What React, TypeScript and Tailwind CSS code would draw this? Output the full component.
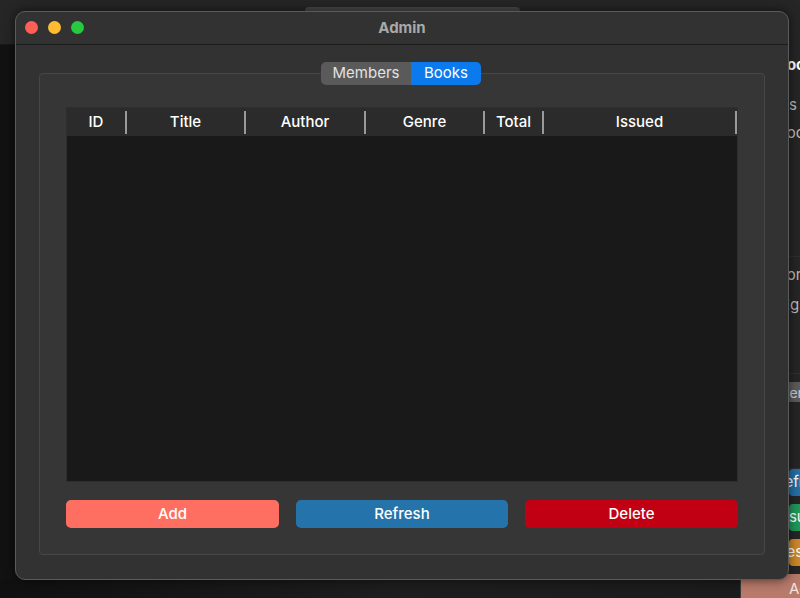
const FONT = "Inter, Roboto, 'Liberation Sans', sans-serif";

const columns = [
  { label: "ID", width: "w-[60px]" },
  { label: "Title", width: "w-[119px]" },
  { label: "Author", width: "w-[120px]" },
  { label: "Genre", width: "w-[119px]" },
  { label: "Total", width: "w-[59px]" },
  { label: "Issued", width: "w-[193px]" },
];

function BackgroundWindow() {
  // the window behind, mostly covered by Admin
  return (
    <div className="absolute left-[740px] top-[44px] w-[120px] h-[560px] bg-[#262626] border-l border-[#3a3a3a] flex flex-col text-[15px] text-[#dcdcdc]">
      <div className="h-[33px] flex items-end pl-[36px] font-bold text-white">Books</div>
      <div className="h-[40px] flex items-end pl-[44px] text-[#bdbdbd]">Is</div>
      <div className="h-[28px] flex items-end pl-[36px] text-[#bdbdbd]">Book</div>
      <div className="h-[112px] border-b border-[#303030]" />
      <div className="h-[30px] flex items-end pl-[36px] text-[#bdbdbd]">Born</div>
      <div className="h-[30px] flex items-end pl-[40px] text-[#bdbdbd]">Eg</div>
      <div className="h-[58px] border-b border-[#303030]" />
      <div className="mt-[8px] h-[20px] ml-[48px] bg-[#5c5c5c] text-[#cfcfcf] text-[14px] flex items-center">
        <span className="-ml-[10px]">Genre</span>
      </div>
      <div className="h-[67px] border-b border-[#303030]" />
      <div className="h-[27px] ml-[48px] bg-[#2471a8] rounded-[4px] text-white flex items-center">
        <span className="-ml-[14px]">Refresh</span>
      </div>
      <div className="mt-[8px] h-[27px] ml-[48px] bg-[#1e9a5a] rounded-[4px] text-white flex items-center">
        <span className="-ml-[12px]">Issue</span>
      </div>
      <div className="mt-[8px] h-[27px] ml-[48px] bg-[#cf8a2a] rounded-[4px] text-white flex items-center">
        <span className="-ml-[12px]">Reset</span>
      </div>
      <div className="mt-[8px] h-[30px] bg-[#b87a6a] rounded-[4px] text-[#f3e3de] flex items-center pl-[48px]">Admin</div>
    </div>
  );
}

export default function App() {
  return (
    <div
      className="relative w-[800px] h-[598px] overflow-hidden bg-[#121212]"
      style={{ fontFamily: FONT }}
    >
      {/* desktop behind */}
      <div className="h-[45px] bg-[#262626] border-b border-[#1a1a1a] flex justify-center">
        <div className="mt-[7px] ml-[25px] w-[215px] h-[5px] rounded-t-[4px] bg-[#474747]" />
      </div>
      <div className="absolute left-0 right-0 bottom-0 h-[18px] bg-gradient-to-r from-[#101010] via-[#1e1e1e] to-[#1b1b1b]" />
      <BackgroundWindow />

      {/* Admin window */}
      <div className="absolute left-[15px] top-[11px] w-[774px] h-[569px] rounded-[10px] bg-[#323232] border border-[#5b5b5b] shadow-[0_0_12px_rgba(0,0,0,0.6)] flex flex-col">
        {/* title bar */}
        <div className="relative h-[33px] shrink-0 flex items-center justify-center border-b border-[#1c1c1c]">
          <div className="absolute left-[9px] top-[9px] flex gap-[10px]">
            <span className="w-[13px] h-[13px] rounded-full bg-[#fe5f57]" />
            <span className="w-[13px] h-[13px] rounded-full bg-[#febc2e]" />
            <span className="w-[13px] h-[13px] rounded-full bg-[#28c840]" />
          </div>
          <span className="text-[15px] font-bold text-[#a9a9a9]">Admin</span>
        </div>

        {/* group box */}
        <div className="relative mt-[28px] ml-[23px] w-[726px] h-[482px] rounded-[4px] bg-[#363636] border border-[#474747] px-[26px] pt-[33px]">
          {/* segmented tabs */}
          <div className="absolute left-[281px] -top-[12px] h-[23px] w-[160px] flex rounded-[5px] overflow-hidden text-[15px]">
            <div className="w-[90px] bg-[#5a5a5a] text-[#e2e2e2] flex items-center justify-center">Members</div>
            <div className="flex-1 bg-[#0a7aed] text-white flex items-center justify-center">Books</div>
          </div>

          {/* table */}
          <div className="w-[672px] h-[375px] flex flex-col bg-[#191919] border border-[#2e2e2e]">
            <div className="h-[28px] shrink-0 flex bg-[#2b2b2b] text-[15px] font-medium text-white">
              {columns.map((c) => (
                <div key={c.label} className={`${c.width} flex items-center`}>
                  <span className="flex-1 text-center">{c.label}</span>
                  <span className="w-[2px] h-[23px] bg-[#9a9a9a]" />
                </div>
              ))}
            </div>
            <div className="flex-1" />
          </div>

          {/* buttons */}
          <div className="mt-[18px] flex gap-[17px] text-[15px] font-medium text-white">
            <button className="w-[213px] h-[28px] rounded-[5px] bg-[#ff6f61]">Add</button>
            <button className="w-[212px] h-[28px] rounded-[5px] bg-[#2474ab]">Refresh</button>
            <button className="w-[213px] h-[28px] rounded-[5px] bg-[#c20013]">Delete</button>
          </div>
        </div>
      </div>
    </div>
  );
}
